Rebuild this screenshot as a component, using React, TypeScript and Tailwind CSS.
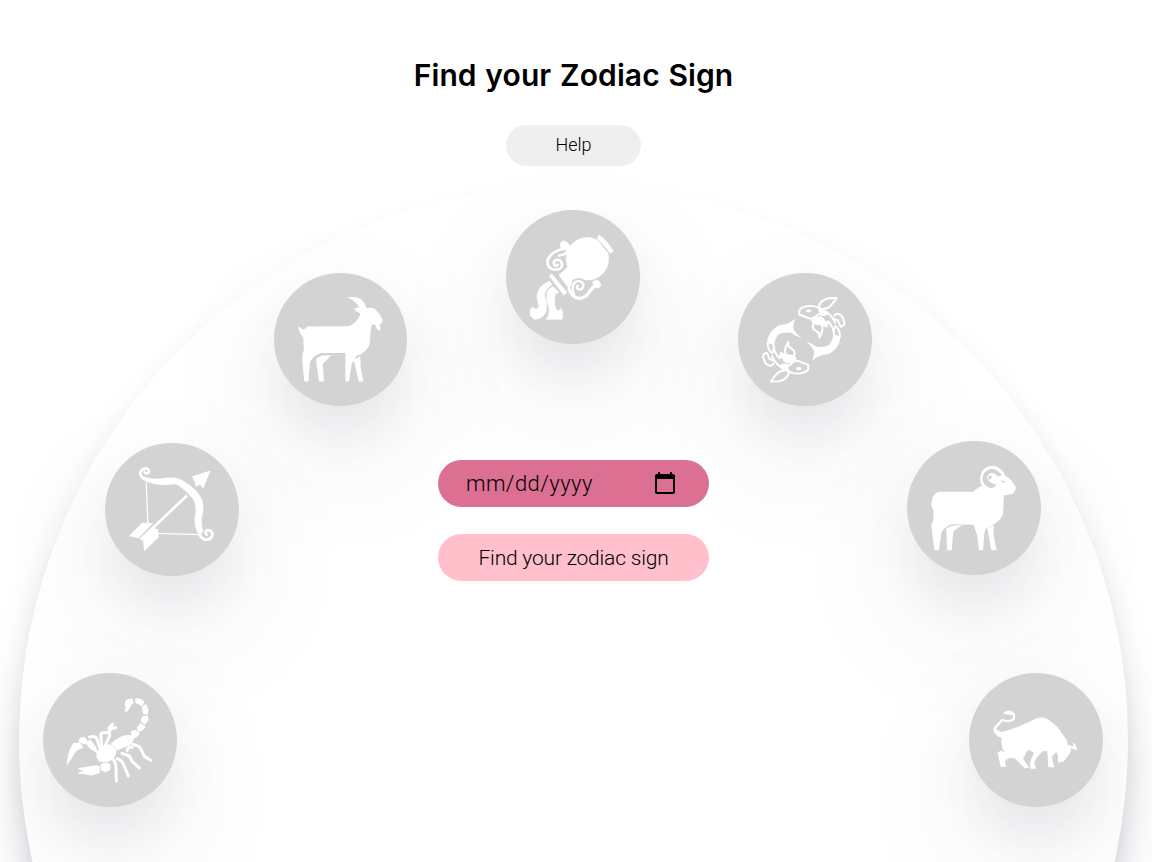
import type { ReactNode } from "react";

const Aquarius = () => (
  <g stroke="#fff" strokeWidth="2" strokeLinejoin="round">
    <circle cx="263" cy="162" r="64" />
    <path d="M204 142 L206 185 L178 211 L208 252 L218 230 L240 216 L270 222 L285 215 L250 130Z" />
    <path d="M281 94 L299 108 L324 140" fill="none" stroke="#d3d3d3" strokeWidth="4" />
    <path d="M298 91 Q324 108 341 139 L332 145 Q315 120 292 101Z" />
    <path d="M157 206 L203 262" fill="none" stroke="#d3d3d3" strokeWidth="5" />
    <path d="M149 214 L156 208 L201 263 L192 271Z" />
    <path d="M182 118 Q184 107 195 109 Q207 113 212 124 L204 138 Q191 135 182 127Z" />
    <path d="M278 232 L293 226 Q306 235 303 244 Q298 252 287 249Z" />
    <path d="M196 131 Q151 139 143 168 Q141 190 163 195 Q185 196 187 180 Q185 164 171 165 Q158 168 163 180 Q168 186 173 180 M178 152 Q195 150 201 142" fill="none" strokeWidth="8" strokeLinecap="round" />
    <path d="M208 254 Q218 279 237 281 Q259 281 269 261 L289 239" fill="none" strokeWidth="10" strokeLinecap="round" />
    <path d="M223 269 Q213 247 225 233 Q243 223 251 238 Q252 255 238 255 Q228 251 234 243" fill="none" strokeWidth="7" strokeLinecap="round" />
    <path d="M217 230 Q230 218 248 224 Q260 234 276 228" fill="none" stroke="#d3d3d3" strokeWidth="4" strokeLinecap="round" />
    <path d="M149 229 L156 240 Q132 256 134 274 Q147 310 134 330 Q122 345 104 344 Q89 337 91 321 Q94 306 99 308 Q112 322 117 303 Q98 250 149 229Z" />
    <path d="M160 246 L177 263 Q164 266 164 280 Q161 302 172 318 Q180 322 184 309 Q192 330 186 344 L137 344 Q149 336 148 309 Q136 282 143 261 Q149 249 160 246Z" />
  </g>
);

const Capricorn = () => (
  <>
    <path d="M90 177 Q99 178 104 185 Q112 183 120 176 L240 175 Q254 172 262 164 Q274 150 279 137 L265 130 L260 121 L274 119 Q270 103 239 88 Q268 85 282 95 Q292 104 297 121 Q310 117 323 124 Q340 141 345 158 L344 164 Q340 168 336 169 L340 183 L334 190 L327 182 Q326 172 319 169 Q308 171 310 181 Q307 222 304 234 Q294 256 266 265 L252 289 L244 342 L233 342 L233 256 L160 256 Q136 264 126 284 L122 342 L109 342 L103 277 L105 253 L108 249 L106 211 Q94 196 90 177Z" />
    <path d="M148 270 L161 264 L191 262 L165 289 L168 342 L154 342 L145 282Z" />
    <path d="M258 276 L278 266 L279 300 L287 342 L273 342Z" />
  </>
);

const FishHalf = () => (
  <>
    <path d="M222 222 Q240 225 254 237 Q277 240 292 232 Q304 217 305 200 L322 205 L326 215 Q319 243 292 259 Q256 264 246 276 L241 279 Q249 260 247 250 Q240 233 222 222Z" />
    <path d="M238 158 Q257 143 270 146 Q279 150 280 159 L291 163 L287 180 L268 172 L251 171 L240 164Z" />
    <path d="M203 126 Q210 116 232 114 Q254 114 268 124 L286 138 Q276 143 261 138 L247 150 L236 153 L218 146 L202 140Z M268 124 Q300 137 311 166 M289 160 Q303 173 307 197 M311 175 Q324 184 325 207 M311 175 Q303 190 309 207 M261 116 Q265 98 290 91 L315 90 Q307 103 299 111 Q290 123 277 123 M308 144 Q316 131 331 145 L339 165 L337 172 L327 177 L319 158 L307 153 M245 169 Q239 180 251 188 L262 196 L263 210 Q278 186 269 170" fill="none" stroke="#fff" strokeWidth="6" strokeLinejoin="round" strokeLinecap="round" />
    <path d="M257 117 Q266 115 280 127 L286 138 L264 137Z" />
    <ellipse cx="231" cy="129" rx="8" ry="5" />
  </>
);

const Pisces = () => (
  <>
    <FishHalf />
    <g transform="rotate(180 216 216)"><FishHalf /></g>
  </>
);

const Sagittarius = () => (
  <>
    <path d="M142 134 L147 262 M171 290 L309 294" fill="none" stroke="#fff" strokeWidth="4" />
    <path d="M125 309 L265 176" fill="none" stroke="#fff" strokeWidth="8" />
    <path d="M280 119 L336 101 L314 155 L304 143 L291 150 L288 135Z" />
    <path d="M129 258 L163 259 L119 305 L90 299Z" />
    <path d="M177 278 L180 302 L136 344 L132 308 L164 274Z" />
    <path d="M137 120 Q164 130 202 123 Q238 119 260 136 Q298 159 311 190 Q318 212 309 247 Q308 270 315 283 L303 296 Q287 279 288 246 Q297 198 277 180 Q254 153 231 142 Q180 148 160 139 Q139 136 129 122Z" />
    <path d="M149 130 Q125 126 124 108 Q127 94 143 94 Q153 99 149 107 Q142 113 137 105 M301 286 Q302 303 320 309 Q338 311 342 294 Q340 280 327 280 Q315 285 324 294" fill="none" stroke="#fff" strokeWidth="8" strokeLinecap="round" />
  </>
);

const Aries = () => (
  <>
    <path d="M113 171 L217 171 Q226 162 243 153 Q232 127 246 106 Q265 88 287 94 Q306 103 314 122 Q334 135 339 147 Q349 155 344 166 L337 177 L310 182 L307 237 Q301 259 272 273 Q253 277 251 294 L247 347 L235 347 L229 301 L219 270 L154 269 Q135 274 122 292 L114 347 L100 347 L91 268 L97 260 L98 227 Q88 212 93 198 Q96 177 113 171Z" />
    <path d="M136 280 L156 273 L183 271 L157 291 L153 347 L139 347Z" />
    <path d="M259 279 L280 272 L278 299 L288 347 L272 347 L263 297Z" />
    <path d="M302 118 Q288 101 269 102 Q246 109 245 132 Q248 157 273 160 L279 157 L289 150 Q264 147 259 129 Q263 109 284 117 L291 125 L302 123Z" fill="#d3d3d3" />
    <path d="M263 124 L274 123 L270 133 L263 134Z" fill="#d3d3d3" />
    <path d="M303 137 Q309 136 315 143 L303 143Z" fill="#d3d3d3" />
  </>
);

const Scorpio = () => (
  <>
    <path d="M158 211 Q174 206 181 217 L190 247 M196 245 L192 203 Q194 195 213 198 M206 235 L219 207 L217 183 L228 172 M218 188 L237 182 M230 279 Q237 287 238 306 L239 343 M241 276 Q255 278 262 297 L275 328 M256 260 L278 268 L287 285 L308 304 M271 252 Q274 237 286 242 M288 232 L308 240 Q319 257 323 269 L342 281" fill="none" stroke="#fff" strokeWidth="9" strokeLinecap="round" strokeLinejoin="round" />
    <g stroke="#fff" strokeWidth="4" strokeLinejoin="round">
      <path d="M192 247 L207 235 L222 235 L238 250 Q238 262 227 277 L211 284 L188 283 L181 271 L181 258Z" />
      <path d="M225 231 Q238 219 255 210 Q278 205 291 208 Q290 224 278 234 L244 248Z" />
      <path d="M285 195 L297 191 L307 202 L296 212 L287 208Z M302 184 L311 171 L325 181 L315 190 L307 194Z M314 163 L319 149 L332 149 L334 160 L324 171Z M318 119 L328 114 L334 130 L331 142 L320 139Z M297 97 Q312 93 321 106 L315 115 L299 107Z M285 96 L289 107 L281 114 Q279 127 266 134 Q272 122 266 114 Q264 98 285 96Z" />
      <path d="M91 292 Q94 256 110 231 L129 230 L137 241 L117 251Z M127 225 Q127 215 139 213 Q147 214 150 223 L143 231Z M149 229 L160 221 L176 242 L181 257 L159 243Z" />
      <path d="M193 295 Q204 285 219 294 L219 308 L205 315 L194 309Z M126 306 L178 298 L187 301 L187 318 L164 325 L126 319 L147 314Z" />
    </g>
  </>
);

const Taurus = () => (
  <>
    <path d="M116 196 Q167 182 209 160 Q229 147 253 156 Q287 177 303 208 Q315 218 315 233 L330 239 Q335 232 327 228 Q342 231 344 250 Q333 250 324 243 Q328 256 316 267 L304 284 L289 288 L285 282 L286 270 L281 255 L267 271 L275 302 L257 302 L254 254 L239 254 Q222 271 214 287 L220 306 L203 306 Q198 286 214 258 L196 248 Q188 261 181 276 L199 304 L186 305 L157 276 Q139 267 126 284 L130 300 L113 300 L104 258 L114 251 L125 257 Q114 244 116 213 Q100 210 91 192 L96 185Z" />
    <path d="M109 207 Q98 197 95 185 L118 159 Q141 168 153 156 Q158 139 142 136 L123 139" fill="none" stroke="#fff" strokeWidth="7" strokeLinejoin="round" />
    <path d="M122 140 Q127 132 142 131 L153 137 L150 145 L134 143Z" />
  </>
);

type Sign = { name: string; position: string; viewBox: string; art: ReactNode };

const signs: Sign[] = [
  { name: "Aquarius", position: "left-[487px] top-[25px]", viewBox: "18 15 402 402", art: <Aquarius /> },
  { name: "Capricorn", position: "left-[254.5px] top-[87.5px]", viewBox: "18 15 402 402", art: <Capricorn /> },
  { name: "Pisces", position: "left-[719px] top-[87.5px]", viewBox: "18 15 402 402", art: <Pisces /> },
  { name: "Sagittarius", position: "left-[86px] top-[257.5px]", viewBox: "18 18 402 402", art: <Sagittarius /> },
  { name: "Aries", position: "left-[888px] top-[256px]", viewBox: "18 18 402 402", art: <Aries /> },
  { name: "Scorpio", position: "left-[24px] top-[488px]", viewBox: "18 18 402 402", art: <Scorpio /> },
  { name: "Taurus", position: "left-[950px] top-[488px]", viewBox: "18 18 402 402", art: <Taurus /> },
];

const SignDisc = ({ position, viewBox, art }: Sign) => (
  <div className={`absolute size-[133.5px] rounded-full bg-[#d3d3d3] shadow-[0_50px_130px_10px_rgba(50,50,93,0.07),0_30px_60px_-10px_rgba(0,0,0,0.09)] ${position}`}>
    <svg viewBox={viewBox} className="size-full" fill="#fff" aria-hidden="true">{art}</svg>
  </div>
);

export default function App() {
  return (
    <main className="flex h-[862px] w-[1152px] flex-col items-center overflow-hidden bg-white pr-[5px] font-['Roboto',sans-serif] text-black">
      <h1 className="mt-[55px] h-10 whitespace-nowrap font-['Inter',sans-serif] text-[30px] leading-10 font-semibold tracking-[0.1px] [word-spacing:1px]">
        Find your Zodiac Sign
      </h1>
      <button className="mt-[30px] h-[41px] w-[135px] shrink-0 rounded-full bg-[#efefef] pb-[2px] text-[18px] leading-[39px] font-light">Help</button>
      <section className="relative mt-[19px] flex h-[1110px] w-[1109px] shrink-0 flex-col items-center rounded-full shadow-[0_30px_50px_-16px_rgba(50,50,93,0.25),0_18px_36px_-18px_rgba(0,0,0,0.26)]">
        {signs.map((sign) => <SignDisc key={sign.name} {...sign} />)}
        <form className="relative mt-[275px] flex w-[271px] flex-col gap-[27px]" onSubmit={(e) => e.preventDefault()}>
          <label className="flex h-[47px] items-center justify-between rounded-full bg-[#db7093] pr-[32px] pl-[28px] text-[22px] font-light">
            <span className="tracking-[0.4px]">mm/dd/yyyy</span>
            <svg viewBox="0 0 24 24" className="relative -top-px size-6" fill="currentColor" aria-hidden="true">
              <path d="M20 3h-1V1h-2v2H7V1H5v2H4c-1.1 0-2 .9-2 2v16c0 1.1.9 2 2 2h16c1.1 0 2-.9 2-2V5c0-1.1-.9-2-2-2zm0 18H4V8h16v13z" />
            </svg>
          </label>
          <button className="h-[47px] rounded-full bg-[#ffc0cb] text-[21px] leading-[46px] font-light tracking-[-0.2px]">Find your zodiac sign</button>
        </form>
      </section>
    </main>
  );
}
